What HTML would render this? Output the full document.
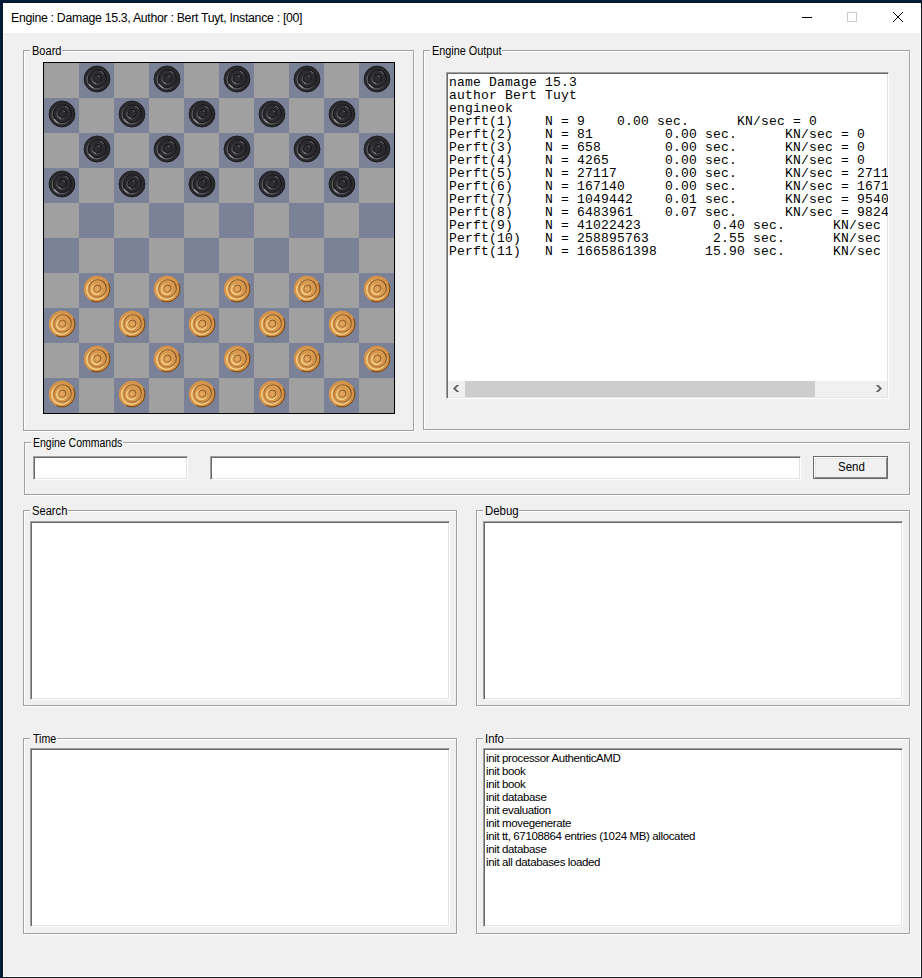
<!DOCTYPE html>
<html><head><meta charset="utf-8">
<style>
html,body{margin:0;padding:0}
body{width:922px;height:978px;position:relative;overflow:hidden;background:#021c3c;font-family:"Liberation Sans",sans-serif}
div{position:absolute;box-sizing:border-box}
.gw{border:1px solid #fff}
.gg{border:1px solid #a0a0a0}
.lbl{height:14px;background:#f0f0f0;font-size:12px;line-height:14px;color:#000;white-space:nowrap}
.ed{background:#fff;border-style:solid;border-width:1px;border-color:#a0a0a0 #fff #fff #a0a0a0;box-shadow:inset 1px 1px 0 #696969, inset -1px -1px 0 #e3e3e3;overflow:hidden}
.mono{position:absolute;left:2px;top:1px;font-family:"Liberation Mono",monospace;font-size:13px;letter-spacing:0.2px;line-height:13px;white-space:pre;color:#000;margin:0}
.info{position:absolute;left:2px;top:3px;font-size:11.5px;line-height:13px;white-space:pre;color:#000;letter-spacing:-0.37px}
</style></head><body>

<div style="left:2px;top:2px;width:920px;height:976px;background:#10161e"></div>
<div style="left:3px;top:3px;width:918px;height:974px;background:#fff"></div>
<div style="left:3px;top:33px;width:1px;height:943px;background:#f8f8f8"></div>
<div style="left:4px;top:33px;width:916px;height:943px;background:#f0f0f0"></div>
<div style="left:11px;top:10px;font-size:12.3px;letter-spacing:-0.3px;line-height:16px;color:#000;white-space:nowrap">Engine : Damage 15.3, Author : Bert Tuyt, Instance : [00]</div>
<div style="left:802px;top:17px;width:10px;height:1px;background:#000"></div>
<div style="left:847px;top:12px;width:10px;height:10px;border:1px solid #cccccc"></div>
<svg style="position:absolute;left:892px;top:11px" width="12" height="12" viewBox="0 0 12 12"><path d="M1 1 L11 11 M11 1 L1 11" stroke="#000" stroke-width="1"/></svg>
<div class="gw" style="left:24px;top:51px;width:391px;height:381px"></div>
<div class="gg" style="left:23px;top:50px;width:391px;height:381px"></div>
<div class="lbl" style="left:30px;top:44px;width:32px"><span style="position:absolute;left:1.5px;top:0;transform:scaleX(0.92);transform-origin:0 0">Board</span></div>
<div class="gw" style="left:424px;top:51px;width:487px;height:380px"></div>
<div class="gg" style="left:423px;top:50px;width:487px;height:380px"></div>
<div class="lbl" style="left:430px;top:44px;width:72px"><span style="position:absolute;left:2px;top:0;transform:scaleX(0.905);transform-origin:0 0">Engine Output</span></div>
<div class="gw" style="left:25px;top:443px;width:886px;height:53px"></div>
<div class="gg" style="left:24px;top:442px;width:886px;height:53px"></div>
<div class="lbl" style="left:31px;top:436px;width:92px"><span style="position:absolute;left:2px;top:0;transform:scaleX(0.875);transform-origin:0 0">Engine Commands</span></div>
<div class="gw" style="left:24px;top:511px;width:434px;height:196px"></div>
<div class="gg" style="left:23px;top:510px;width:434px;height:196px"></div>
<div class="lbl" style="left:30px;top:504px;width:38px"><span style="position:absolute;left:1.5px;top:0;transform:scaleX(0.93);transform-origin:0 0">Search</span></div>
<div class="gw" style="left:477px;top:511px;width:434px;height:196px"></div>
<div class="gg" style="left:476px;top:510px;width:434px;height:196px"></div>
<div class="lbl" style="left:483px;top:504px;width:36px"><span style="position:absolute;left:2px;top:0;transform:scaleX(0.95);transform-origin:0 0">Debug</span></div>
<div class="gw" style="left:24px;top:739px;width:434px;height:196px"></div>
<div class="gg" style="left:23px;top:738px;width:434px;height:196px"></div>
<div class="lbl" style="left:30px;top:732px;width:27px"><span style="position:absolute;left:2.5px;top:0;transform:scaleX(0.885);transform-origin:0 0">Time</span></div>
<div class="gw" style="left:477px;top:739px;width:434px;height:196px"></div>
<div class="gg" style="left:476px;top:738px;width:434px;height:196px"></div>
<div class="lbl" style="left:483px;top:732px;width:22px"><span style="position:absolute;left:2px;top:0;transform:scaleX(0.945);transform-origin:0 0">Info</span></div>
<svg style="position:absolute;left:43px;top:62px" width="352" height="352" viewBox="0 0 352 352"><defs>
<radialGradient id="bk" cx="0.45" cy="0.45" r="0.6"><stop offset="0" stop-color="#2e2e32"/><stop offset="0.8" stop-color="#2a2a2e"/><stop offset="1" stop-color="#222226"/></radialGradient>
<radialGradient id="wt" cx="0.45" cy="0.45" r="0.6"><stop offset="0" stop-color="#dea056"/><stop offset="1" stop-color="#d08e44"/></radialGradient>
<linearGradient id="gdw" x1="0" y1="1" x2="1" y2="0"><stop offset="0" stop-color="#94602a" stop-opacity="0.25"/><stop offset="0.6" stop-color="#8a5624" stop-opacity="1"/><stop offset="1" stop-color="#7a4a1c" stop-opacity="1"/></linearGradient>
<linearGradient id="glw" x1="0" y1="1" x2="1" y2="0"><stop offset="0" stop-color="#fbe09a" stop-opacity="1"/><stop offset="0.5" stop-color="#f4d08a" stop-opacity="0.9"/><stop offset="1" stop-color="#f0c880" stop-opacity="0.2"/></linearGradient>
<linearGradient id="gdb" x1="0" y1="1" x2="1" y2="0"><stop offset="0" stop-color="#141417" stop-opacity="0.5"/><stop offset="1" stop-color="#0e0e10" stop-opacity="1"/></linearGradient>
<linearGradient id="glb" x1="0" y1="1" x2="1" y2="0"><stop offset="0" stop-color="#707078" stop-opacity="1"/><stop offset="1" stop-color="#505056" stop-opacity="0.3"/></linearGradient>
<g id="pb">
<circle cx="0" cy="0" r="13.2" fill="url(#bk)"/>
<circle cx="0" cy="0" r="12.9" fill="none" stroke="#1c1c20" stroke-width="0.7"/>
<circle cx="-0.5" cy="0.5" r="9.4" fill="none" stroke="url(#glb)" stroke-width="1.1"/>
<circle cx="0.4" cy="-0.4" r="8.8" fill="none" stroke="url(#gdb)" stroke-width="1.3"/>
<circle cx="-0.4" cy="0.4" r="4.6" fill="none" stroke="url(#glb)" stroke-width="1.0"/>
<circle cx="0.3" cy="-0.3" r="4.0" fill="none" stroke="url(#gdb)" stroke-width="1.2"/>
<path d="M-7.6 5.4 A9.4 9.4 0 0 0 -4.0 8.6" stroke="#b0b0b6" stroke-width="1.1" fill="none" stroke-linecap="round" opacity="0.8"/>
<path d="M3.6 -7.6 A8.6 8.6 0 0 1 6.4 -5.6" stroke="#707076" stroke-width="1" fill="none" stroke-linecap="round"/>
<path d="M-3.1 3.0 A4.4 4.4 0 0 0 -1.6 4.1" stroke="#b8b8bc" stroke-width="1.0" fill="none" stroke-linecap="round" opacity="0.8"/>
<path d="M1.3 -3.4 A3.6 3.6 0 0 1 2.6 -2.6" stroke="#78787e" stroke-width="0.9" fill="none" stroke-linecap="round"/>
</g>
<g id="pw">
<circle cx="0" cy="0" r="13.2" fill="url(#wt)"/>
<path d="M11.6 -5.8 A13 13 0 0 1 -5.8 11.6" stroke="#5a3408" stroke-width="1.0" fill="none" opacity="0.85"/>
<circle cx="-0.6" cy="0.6" r="9.7" fill="none" stroke="url(#glw)" stroke-width="1.3"/>
<circle cx="0.6" cy="-0.6" r="8.7" fill="none" stroke="url(#gdw)" stroke-width="1.1"/>
<circle cx="-0.5" cy="0.5" r="4.9" fill="none" stroke="url(#glw)" stroke-width="1.2"/>
<circle cx="0.4" cy="-0.4" r="3.6" fill="none" stroke="url(#gdw)" stroke-width="1.0"/>
<circle cx="0" cy="0" r="1.5" fill="#e4ac62"/>
</g>
</defs><rect x="0" y="0" width="352" height="352" fill="#000"/><rect x="1" y="1" width="35" height="35" fill="#a0a0a0"/><rect x="36" y="1" width="35" height="35" fill="#7b8196"/><rect x="71" y="1" width="35" height="35" fill="#a0a0a0"/><rect x="106" y="1" width="35" height="35" fill="#7b8196"/><rect x="141" y="1" width="35" height="35" fill="#a0a0a0"/><rect x="176" y="1" width="35" height="35" fill="#7b8196"/><rect x="211" y="1" width="35" height="35" fill="#a0a0a0"/><rect x="246" y="1" width="35" height="35" fill="#7b8196"/><rect x="281" y="1" width="35" height="35" fill="#a0a0a0"/><rect x="316" y="1" width="35" height="35" fill="#7b8196"/><rect x="1" y="36" width="35" height="35" fill="#7b8196"/><rect x="36" y="36" width="35" height="35" fill="#a0a0a0"/><rect x="71" y="36" width="35" height="35" fill="#7b8196"/><rect x="106" y="36" width="35" height="35" fill="#a0a0a0"/><rect x="141" y="36" width="35" height="35" fill="#7b8196"/><rect x="176" y="36" width="35" height="35" fill="#a0a0a0"/><rect x="211" y="36" width="35" height="35" fill="#7b8196"/><rect x="246" y="36" width="35" height="35" fill="#a0a0a0"/><rect x="281" y="36" width="35" height="35" fill="#7b8196"/><rect x="316" y="36" width="35" height="35" fill="#a0a0a0"/><rect x="1" y="71" width="35" height="35" fill="#a0a0a0"/><rect x="36" y="71" width="35" height="35" fill="#7b8196"/><rect x="71" y="71" width="35" height="35" fill="#a0a0a0"/><rect x="106" y="71" width="35" height="35" fill="#7b8196"/><rect x="141" y="71" width="35" height="35" fill="#a0a0a0"/><rect x="176" y="71" width="35" height="35" fill="#7b8196"/><rect x="211" y="71" width="35" height="35" fill="#a0a0a0"/><rect x="246" y="71" width="35" height="35" fill="#7b8196"/><rect x="281" y="71" width="35" height="35" fill="#a0a0a0"/><rect x="316" y="71" width="35" height="35" fill="#7b8196"/><rect x="1" y="106" width="35" height="35" fill="#7b8196"/><rect x="36" y="106" width="35" height="35" fill="#a0a0a0"/><rect x="71" y="106" width="35" height="35" fill="#7b8196"/><rect x="106" y="106" width="35" height="35" fill="#a0a0a0"/><rect x="141" y="106" width="35" height="35" fill="#7b8196"/><rect x="176" y="106" width="35" height="35" fill="#a0a0a0"/><rect x="211" y="106" width="35" height="35" fill="#7b8196"/><rect x="246" y="106" width="35" height="35" fill="#a0a0a0"/><rect x="281" y="106" width="35" height="35" fill="#7b8196"/><rect x="316" y="106" width="35" height="35" fill="#a0a0a0"/><rect x="1" y="141" width="35" height="35" fill="#a0a0a0"/><rect x="36" y="141" width="35" height="35" fill="#7b8196"/><rect x="71" y="141" width="35" height="35" fill="#a0a0a0"/><rect x="106" y="141" width="35" height="35" fill="#7b8196"/><rect x="141" y="141" width="35" height="35" fill="#a0a0a0"/><rect x="176" y="141" width="35" height="35" fill="#7b8196"/><rect x="211" y="141" width="35" height="35" fill="#a0a0a0"/><rect x="246" y="141" width="35" height="35" fill="#7b8196"/><rect x="281" y="141" width="35" height="35" fill="#a0a0a0"/><rect x="316" y="141" width="35" height="35" fill="#7b8196"/><rect x="1" y="176" width="35" height="35" fill="#7b8196"/><rect x="36" y="176" width="35" height="35" fill="#a0a0a0"/><rect x="71" y="176" width="35" height="35" fill="#7b8196"/><rect x="106" y="176" width="35" height="35" fill="#a0a0a0"/><rect x="141" y="176" width="35" height="35" fill="#7b8196"/><rect x="176" y="176" width="35" height="35" fill="#a0a0a0"/><rect x="211" y="176" width="35" height="35" fill="#7b8196"/><rect x="246" y="176" width="35" height="35" fill="#a0a0a0"/><rect x="281" y="176" width="35" height="35" fill="#7b8196"/><rect x="316" y="176" width="35" height="35" fill="#a0a0a0"/><rect x="1" y="211" width="35" height="35" fill="#a0a0a0"/><rect x="36" y="211" width="35" height="35" fill="#7b8196"/><rect x="71" y="211" width="35" height="35" fill="#a0a0a0"/><rect x="106" y="211" width="35" height="35" fill="#7b8196"/><rect x="141" y="211" width="35" height="35" fill="#a0a0a0"/><rect x="176" y="211" width="35" height="35" fill="#7b8196"/><rect x="211" y="211" width="35" height="35" fill="#a0a0a0"/><rect x="246" y="211" width="35" height="35" fill="#7b8196"/><rect x="281" y="211" width="35" height="35" fill="#a0a0a0"/><rect x="316" y="211" width="35" height="35" fill="#7b8196"/><rect x="1" y="246" width="35" height="35" fill="#7b8196"/><rect x="36" y="246" width="35" height="35" fill="#a0a0a0"/><rect x="71" y="246" width="35" height="35" fill="#7b8196"/><rect x="106" y="246" width="35" height="35" fill="#a0a0a0"/><rect x="141" y="246" width="35" height="35" fill="#7b8196"/><rect x="176" y="246" width="35" height="35" fill="#a0a0a0"/><rect x="211" y="246" width="35" height="35" fill="#7b8196"/><rect x="246" y="246" width="35" height="35" fill="#a0a0a0"/><rect x="281" y="246" width="35" height="35" fill="#7b8196"/><rect x="316" y="246" width="35" height="35" fill="#a0a0a0"/><rect x="1" y="281" width="35" height="35" fill="#a0a0a0"/><rect x="36" y="281" width="35" height="35" fill="#7b8196"/><rect x="71" y="281" width="35" height="35" fill="#a0a0a0"/><rect x="106" y="281" width="35" height="35" fill="#7b8196"/><rect x="141" y="281" width="35" height="35" fill="#a0a0a0"/><rect x="176" y="281" width="35" height="35" fill="#7b8196"/><rect x="211" y="281" width="35" height="35" fill="#a0a0a0"/><rect x="246" y="281" width="35" height="35" fill="#7b8196"/><rect x="281" y="281" width="35" height="35" fill="#a0a0a0"/><rect x="316" y="281" width="35" height="35" fill="#7b8196"/><rect x="1" y="316" width="35" height="35" fill="#7b8196"/><rect x="36" y="316" width="35" height="35" fill="#a0a0a0"/><rect x="71" y="316" width="35" height="35" fill="#7b8196"/><rect x="106" y="316" width="35" height="35" fill="#a0a0a0"/><rect x="141" y="316" width="35" height="35" fill="#7b8196"/><rect x="176" y="316" width="35" height="35" fill="#a0a0a0"/><rect x="211" y="316" width="35" height="35" fill="#7b8196"/><rect x="246" y="316" width="35" height="35" fill="#a0a0a0"/><rect x="281" y="316" width="35" height="35" fill="#7b8196"/><rect x="316" y="316" width="35" height="35" fill="#a0a0a0"/><use href="#pb" x="54.0" y="17.0"/><use href="#pb" x="124.0" y="17.0"/><use href="#pb" x="194.0" y="17.0"/><use href="#pb" x="264.0" y="17.0"/><use href="#pb" x="334.0" y="17.0"/><use href="#pb" x="19.0" y="52.0"/><use href="#pb" x="89.0" y="52.0"/><use href="#pb" x="159.0" y="52.0"/><use href="#pb" x="229.0" y="52.0"/><use href="#pb" x="299.0" y="52.0"/><use href="#pb" x="54.0" y="87.0"/><use href="#pb" x="124.0" y="87.0"/><use href="#pb" x="194.0" y="87.0"/><use href="#pb" x="264.0" y="87.0"/><use href="#pb" x="334.0" y="87.0"/><use href="#pb" x="19.0" y="122.0"/><use href="#pb" x="89.0" y="122.0"/><use href="#pb" x="159.0" y="122.0"/><use href="#pb" x="229.0" y="122.0"/><use href="#pb" x="299.0" y="122.0"/><use href="#pw" x="54.0" y="227.0"/><use href="#pw" x="124.0" y="227.0"/><use href="#pw" x="194.0" y="227.0"/><use href="#pw" x="264.0" y="227.0"/><use href="#pw" x="334.0" y="227.0"/><use href="#pw" x="19.0" y="262.0"/><use href="#pw" x="89.0" y="262.0"/><use href="#pw" x="159.0" y="262.0"/><use href="#pw" x="229.0" y="262.0"/><use href="#pw" x="299.0" y="262.0"/><use href="#pw" x="54.0" y="297.0"/><use href="#pw" x="124.0" y="297.0"/><use href="#pw" x="194.0" y="297.0"/><use href="#pw" x="264.0" y="297.0"/><use href="#pw" x="334.0" y="297.0"/><use href="#pw" x="19.0" y="332.0"/><use href="#pw" x="89.0" y="332.0"/><use href="#pw" x="159.0" y="332.0"/><use href="#pw" x="229.0" y="332.0"/><use href="#pw" x="299.0" y="332.0"/></svg>
<div class="ed" style="left:446px;top:72px;width:443px;height:327px"><div class="mono" style="left:2px;top:3px">name Damage 15.3
author Bert Tuyt
engineok
Perft(1)    N = 9    0.00 sec.      KN/sec = 0
Perft(2)    N = 81         0.00 sec.      KN/sec = 0
Perft(3)    N = 658        0.00 sec.      KN/sec = 0
Perft(4)    N = 4265       0.00 sec.      KN/sec = 0
Perft(5)    N = 27117      0.00 sec.      KN/sec = 27117
Perft(6)    N = 167140     0.00 sec.      KN/sec = 167140
Perft(7)    N = 1049442    0.01 sec.      KN/sec = 95403
Perft(8)    N = 6483961    0.07 sec.      KN/sec = 98241
Perft(9)    N = 41022423         0.40 sec.      KN/sec = 102556
Perft(10)   N = 258895763        2.55 sec.      KN/sec = 101527
Perft(11)   N = 1665861398      15.90 sec.      KN/sec = 104771</div><div style="left:1px;top:308px;width:439px;height:16px;background:#f0f0f0"></div><div style="left:18px;top:308px;width:350px;height:16px;background:#cdcdcd"></div></div>
<svg style="position:absolute;left:0;top:0" width="922" height="978"><path d="M456.6 385 L459.2 385 L455.6 388.5 L459.2 392 L456.6 392 L453 388.5 Z" fill="#606060"/><path d="M875.8 385 L878.4 385 L882 388.5 L878.4 392 L875.8 392 L879.4 388.5 Z" fill="#606060"/></svg>
<div class="ed" style="left:33px;top:456px;width:155px;height:24px"></div>
<div class="ed" style="left:210px;top:456px;width:591px;height:24px"></div>
<div style="left:813px;top:456px;width:75px;height:23px;border:1px solid #696969;background:#f0f0f0;box-shadow:inset 1px 1px 0 #fff, inset -1px -1px 0 #8a8a8a, inset 2px 2px 0 #e3e3e3;font-size:12px;line-height:21px;text-align:left;padding-left:24px"><span style="display:inline-block;transform:scaleX(0.96);transform-origin:0 0">Send</span></div>
<div class="ed" style="left:30px;top:521px;width:420px;height:179px"></div>
<div class="ed" style="left:483px;top:521px;width:420px;height:179px"></div>
<div class="ed" style="left:30px;top:748px;width:420px;height:179px"></div>
<div class="ed" style="left:483px;top:748px;width:420px;height:179px"><div class="info">init processor AuthenticAMD
init book
init book
init database
init evaluation
init movegenerate
init tt, 67108864 entries (1024 MB) allocated
init database
init all databases loaded</div></div>
</body></html>
